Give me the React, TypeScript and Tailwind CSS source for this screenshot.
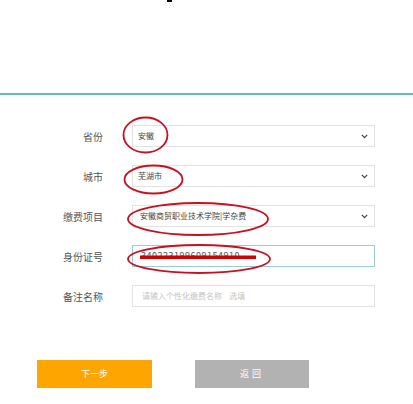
import React from "react";

const font = { fontFamily: '"Microsoft YaHei", "Noto Sans CJK SC", "Noto Sans", sans-serif' };

function Chevron() {
  return (
    <svg width="7" height="5" viewBox="0 0 7 5" className="shrink-0">
      <path d="M0.8 0.8 L3.5 3.6 L6.2 0.8" fill="none" stroke="#444" strokeWidth="1.2" />
    </svg>
  );
}

function Row({ label, children }: { label: string; children: React.ReactNode }) {
  return (
    <div className="flex items-center h-[22px]">
      <div className="w-[103px] text-right text-[10px] text-[#555]">{label}</div>
      <div className="ml-[29px] w-[243px] h-[22px]">{children}</div>
    </div>
  );
}

export default function App() {
  return (
    <div className="relative w-[413px] h-[404px] bg-white overflow-hidden" style={font}>
      {/* header */}
      <div className="h-[93px] flex flex-col items-start">
        <div className="ml-[167px] w-[5px] h-[2px] bg-black" />
        <svg className="ml-[168px] mt-[1px]" width="8" height="5" viewBox="0 0 8 5">
          <g fill="#d4d4d4">
            <rect x="1" y="0" width="1" height="1" />
            <rect x="4" y="1" width="1" height="1" />
            <rect x="2" y="2" width="1" height="1" />
            <rect x="5" y="3" width="1" height="1" />
            <rect x="1" y="4" width="1" height="1" />
          </g>
        </svg>
      </div>
      <div className="h-[2px] bg-[#62bcbc]" />

      {/* form */}
      <div className="pt-[30px] flex flex-col gap-[18px]">
        <Row label="省份">
          <div className="h-full border border-[#e2e2e2] flex items-center justify-between pl-[5px] pr-[6px] text-[8px] text-[#444]">
            <span>安徽</span>
            <Chevron />
          </div>
        </Row>
        <Row label="城市">
          <div className="h-full border border-[#e2e2e2] flex items-center justify-between pl-[5px] pr-[6px] text-[8px] text-[#444]">
            <span>芜湖市</span>
            <Chevron />
          </div>
        </Row>
        <Row label="缴费项目">
          <div className="h-full border border-[#e2e2e2] flex items-center justify-between pl-[7px] pr-[6px] text-[8px] text-[#444]">
            <span>安徽商贸职业技术学院|学杂费</span>
            <Chevron />
          </div>
        </Row>
        <Row label="身份证号">
          <div className="h-full border border-[#9ccbd3] flex items-center pl-[8px] text-[9px] text-[#555] tracking-[0.5px]">
            <span>340223199609154910</span>
          </div>
        </Row>
        <Row label="备注名称">
          <div className="h-full border border-[#e2e2e2] flex items-center pl-[9px] text-[8px] text-[#c4c4c4]">
            <span>请输入个性化缴费名称&nbsp;&nbsp;&nbsp;&nbsp;选填</span>
          </div>
        </Row>
      </div>

      {/* buttons */}
      <div className="mt-[53px] flex pl-[37px] gap-[43px]">
        <div className="w-[115px] h-[28px] bg-[#ffa500] flex items-center justify-center text-white text-[9px]">下一步</div>
        <div className="w-[114px] h-[28px] bg-[#b2b2b2] flex items-center justify-center text-white text-[9px] tracking-[3px]">返回</div>
      </div>

      {/* annotations */}
      <svg className="absolute left-0 top-0 pointer-events-none" width="413" height="404">
        <g fill="none" stroke="#c8101e" strokeWidth="1.8">
          <ellipse cx="145.5" cy="135" rx="22" ry="17.5" />
          <ellipse cx="153.5" cy="179.5" rx="29" ry="14" />
          <ellipse cx="198" cy="219" rx="70" ry="16" />
          <ellipse cx="199" cy="259" rx="71" ry="14" />
        </g>
        <rect x="140" y="255.5" width="116" height="3.5" fill="#d00000" />
      </svg>
    </div>
  );
}
